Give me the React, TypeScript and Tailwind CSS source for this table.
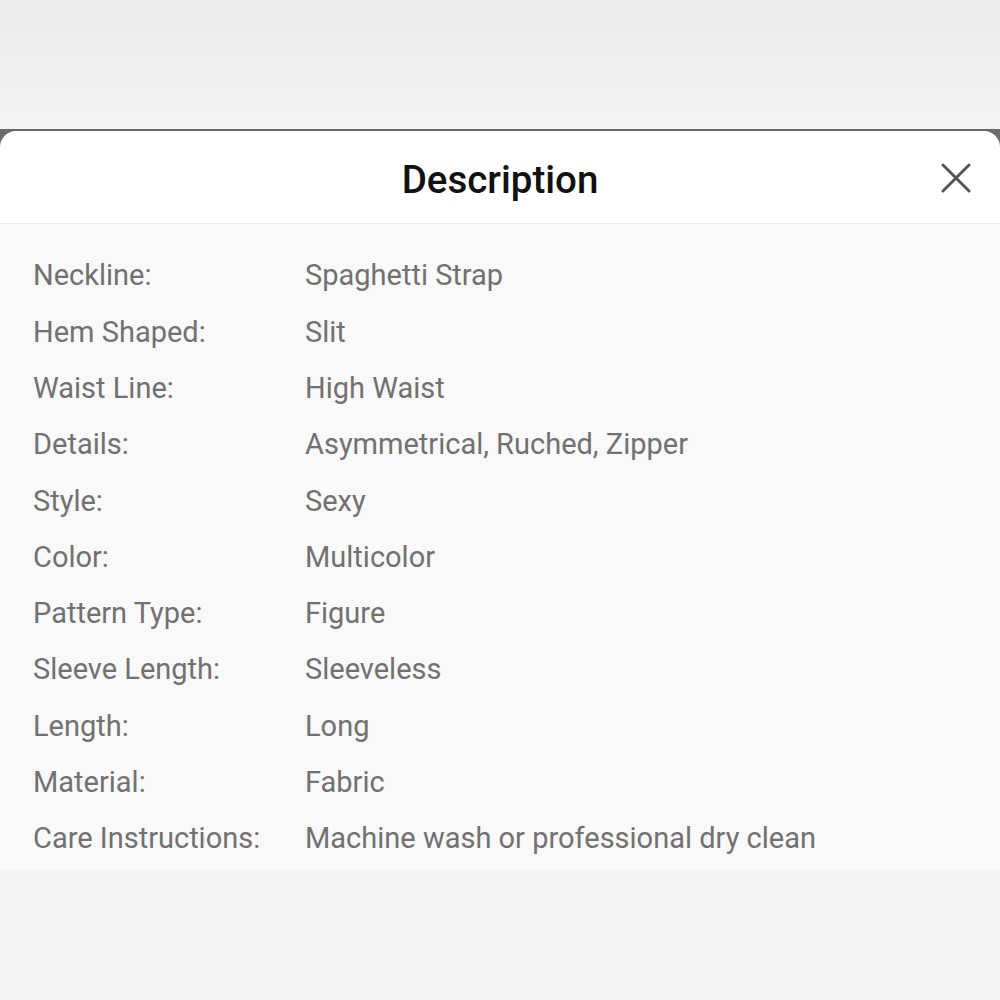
const rows: [string, string][] = [
  ["Neckline:", "Spaghetti Strap"],
  ["Hem Shaped:", "Slit"],
  ["Waist Line:", "High Waist"],
  ["Details:", "Asymmetrical, Ruched, Zipper"],
  ["Style:", "Sexy"],
  ["Color:", "Multicolor"],
  ["Pattern Type:", "Figure"],
  ["Sleeve Length:", "Sleeveless"],
  ["Length:", "Long"],
  ["Material:", "Fabric"],
  ["Care Instructions:", "Machine wash or professional dry clean"],
];

export default function App() {
  return (
    <div
      className="w-[1000px] h-[1000px] flex flex-col bg-[#f3f3f3]"
      style={{ fontFamily: "Roboto, 'Noto Sans', sans-serif" }}
    >
      {/* backdrop above the sheet */}
      <div className="h-[129px] bg-gradient-to-b from-[#ebebeb] to-[#f4f4f4]" />

      {/* sheet */}
      <div className="bg-[#6a6a6a] pt-[2px]">
        <div className="bg-white rounded-t-[16px] h-[93px] relative flex items-center justify-center pt-[6px] border-b border-[#ececec]">
          <h2 className="text-[38.5px] font-medium text-[#111] leading-none">
            Description
          </h2>
          <button className="absolute right-[28px] top-[31px] w-[32px] h-[32px] flex items-center justify-center">
            <svg width="32" height="32" viewBox="0 0 32 32" fill="none">
              <path
                d="M3 3 L29 29 M29 3 L3 29"
                stroke="#555"
                strokeWidth="3"
                strokeLinecap="round"
              />
            </svg>
          </button>
        </div>
      </div>

      <div className="bg-[#f9f9f9] pt-[24px] pb-[3px]">
        {rows.map(([label, value]) => (
          <div key={label} className="flex items-center h-[56.3px] text-[29px] text-[#717171]">
            <div className="w-[305px] pl-[33px] shrink-0">{label}</div>
            <div>{value}</div>
          </div>
        ))}
      </div>

      <div className="flex-1 bg-[#f3f3f3]" />
    </div>
  );
}
